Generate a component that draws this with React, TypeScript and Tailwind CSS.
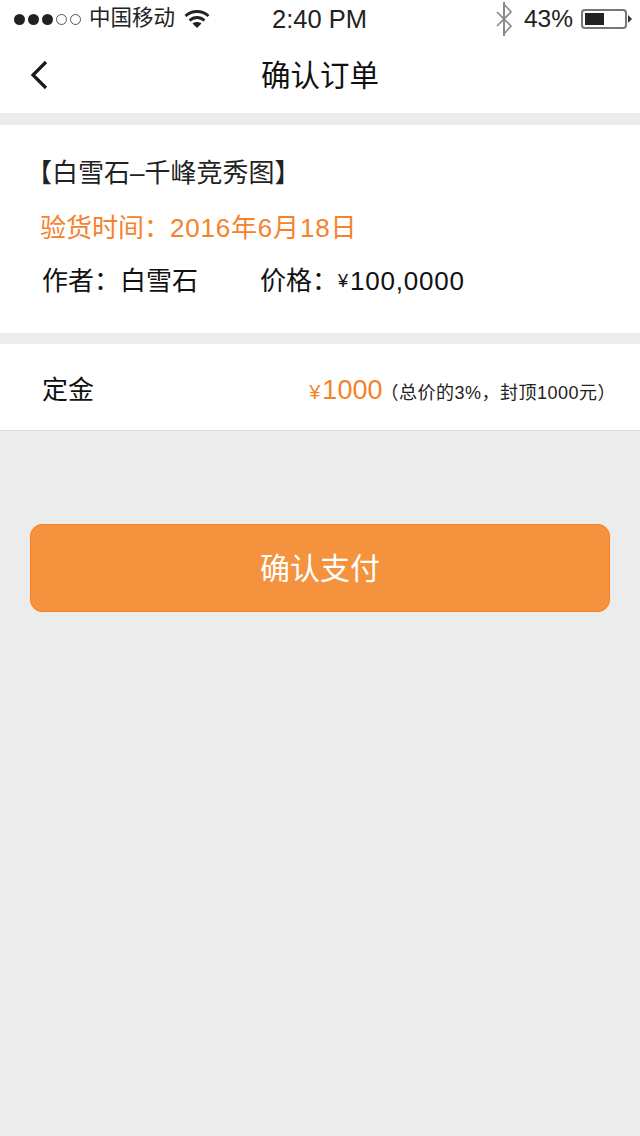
const SANS = 'font-["Liberation_Sans","Noto_Sans_CJK_SC",sans-serif]';

function Signal() {
  return (
    <div className="flex items-center gap-[3px]">
      {[0, 1, 2].map((i) => (
        <span key={i} className="h-[11px] w-[11px] rounded-full bg-[#222]" />
      ))}
      {[3, 4].map((i) => (
        <span key={i} className="h-[11px] w-[11px] rounded-full border border-[#555]" />
      ))}
    </div>
  );
}

function Wifi() {
  return (
    <svg width="26" height="20" viewBox="0 0 26 20" fill="none" stroke="#222" strokeWidth="2.8">
      <path d="M1.5 7C8 1 18 1 24.5 7" />
      <path d="M5.5 11.5C10 7.5 16 7.5 20.5 11.5" />
      <path d="M13 19L8.5 14.6C11 12.6 15 12.6 17.5 14.6Z" fill="#222" stroke="none" />
    </svg>
  );
}

function Bluetooth() {
  return (
    <svg width="18" height="36" viewBox="0 0 18 36" fill="none" stroke="#8a8a8a" strokeWidth="1.6">
      <path d="M9 1V35" strokeWidth="2" />
      <path d="M2 11L16 25L9 33" />
      <path d="M2 25L16 11L9 3" />
    </svg>
  );
}

function Battery() {
  return (
    <div className="flex items-center">
      <div className="flex h-[20px] w-[46px] items-center rounded-[4px] border-2 border-[#777] p-[2px]">
        <div className="h-full w-[19px] bg-[#222]" />
      </div>
      <svg width="5" height="8" viewBox="0 0 5 8" className="ml-px">
        <path d="M0 0L4 4L0 8Z" fill="#333" />
      </svg>
    </div>
  );
}

function StatusBar() {
  return (
    <div className="relative flex h-[38px] items-center justify-between pl-[14px] pr-[7px] text-[#222]">
      <div className="flex items-center">
        <Signal />
        <span className="ml-[8px] text-[21.5px] leading-none">中国移动</span>
        <span className="ml-[9px]">
          <Wifi />
        </span>
      </div>
      <span className="absolute left-[272px] top-[4px] text-[25.5px] leading-[30px]">2:40 PM</span>
      <div className="flex items-center">
        <Bluetooth />
        <span className="ml-[11px] text-[24.5px] leading-none">43%</span>
        <span className="ml-[8px]">
          <Battery />
        </span>
      </div>
    </div>
  );
}

export default function App() {
  return (
    <div className={`flex min-h-[1136px] w-[640px] flex-col bg-[#ececec] ${SANS}`}>
      <div className="bg-white">
        <StatusBar />
        <div className="relative flex h-[75px] items-center justify-center">
          <svg width="20" height="30" viewBox="0 0 20 30" fill="none" stroke="#1a1a1a" strokeWidth="3.2" className="absolute left-[29px] top-[22px]">
            <path d="M17 2L4 15L17 28" />
          </svg>
          <span className="mt-px text-[29.5px] leading-none text-[#111]">确认订单</span>
        </div>
      </div>

      <div className="mt-[12px] flex h-[208px] flex-col bg-white pl-[40px] pt-[32px]">
        <div className="-ml-[14px] flex h-[32px] items-center text-[26px] leading-none text-[#222]">【白雪石–千峰竞秀图】</div>
        <div className="mt-[23px] flex h-[32px] items-center text-[26px] leading-none text-[#f5822a]">
          <span>验货时间：</span>
          <span className="tracking-[0.8px]">2016年6月18日</span>
        </div>
        <div className="mt-[21px] flex h-[32px] items-center pl-[2px] text-[26px] leading-none text-[#111]">
          <span className="w-[218px]">作者：白雪石</span>
          <span>价格：</span>
          <span className="text-[18px]">¥</span>
          <span className="ml-[2px] tracking-[0.8px]">100,0000</span>
        </div>
      </div>

      <div className="mt-[11px] flex h-[87px] items-center justify-between border-b border-[#dcdcdc] bg-white pl-[42px] pr-[24px] pt-[6px]">
        <span className="text-[26px] leading-none text-[#111]">定金</span>
        <div className="flex items-baseline">
          <span className="text-[20px] text-[#f5822a]">¥</span>
          <span className="ml-[2px] text-[27px] text-[#f5822a]">1000</span>
          <span className="-ml-[2px] text-[18px] tracking-[0.5px] text-[#222]">（总价的3%，封顶1000元）</span>
        </div>
      </div>

      <div className="mx-[30px] mt-[93px] flex h-[88px] items-center justify-center rounded-[12px] border border-[#f5821f] bg-[#f5923e] pt-[2px] text-[30px] leading-none text-white">
        确认支付
      </div>
    </div>
  );
}
